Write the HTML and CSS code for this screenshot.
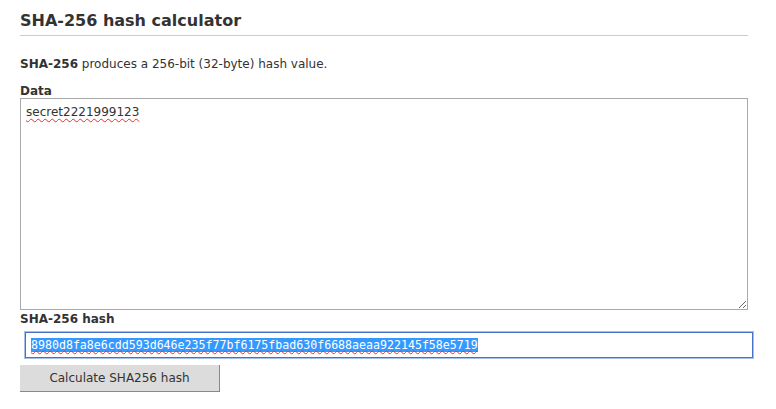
FILE: index.html
```html
<!DOCTYPE html>
<html>
<head>
<meta charset="utf-8">
<link rel="stylesheet" href="styles.css">
</head>
<body>
<div class="page">
  <h1 class="title">SHA-256 hash calculator</h1>
  <p class="intro"><b>SHA-256</b> produces a 256-bit (32-byte) hash value.</p>
  <div class="label">Data</div>
  <div class="data-wrap">
    <textarea class="data" spellcheck="false"></textarea>
    <span class="data-text">secret2221999123</span>
  </div>
  <div class="label label-hash">SHA-256 hash</div>
  <div class="hash-wrap"><div class="hash"><span class="sel">8980d8fa8e6cdd593d646e235f77bf6175fbad630f6688aeaa922145f58e5719</span></div></div>
  <div class="btn">Calculate SHA256 hash</div>
</div>
</body>
</html>
```
FILE: styles.css
```css
html, body { margin: 0; padding: 0; background: #fff; }
body { font-family: "DejaVu Sans", Verdana, sans-serif; color: #333; }
.page { width: 728px; padding: 0 0 0 20px; }
.title {
  margin: 0; padding: 11px 0 4px 0;
  font-size: 16px; font-weight: bold; color: #333;
  border-bottom: 1px solid #ccc; line-height: 20px;
}
.intro { margin: 0; padding-top: 20px; font-size: 12px; line-height: 16px; }
.label { font-size: 12px; font-weight: bold; margin-top: 12px; line-height: 14px; }
.data-wrap { position: relative; }
.data {
  display: block; box-sizing: border-box; width: 728px; height: 212px;
  margin: 0; padding: 6px 5px; border: 1px solid #a9a9a9;
  font-family: "DejaVu Sans", Verdana, sans-serif; font-size: 12px; color: #333;
  resize: both; outline: none;
}
.data-text {
  position: absolute; left: 6px; top: 7px;
  font-size: 12px; line-height: 14px; color: #333;
  text-decoration: underline wavy #e03030; text-decoration-thickness: 1px; text-underline-offset: 2px;
}
.label-hash { margin-top: 2px; }
.hash-wrap { padding: 6px 0 0 5px; }
.hash {
  box-sizing: border-box; width: 728px; height: 26px;
  border: 1px solid #4a72c4; box-shadow: 0 0 0 1px #a6c0ec;
  padding: 5px 5px 0 5px;
  font-family: "DejaVu Sans Mono", "Liberation Mono", monospace; font-size: 11.6px; line-height: 14px;
}
.sel { background: #3399ff; color: #fff; text-decoration: underline wavy #d33; text-decoration-thickness: 1px; }
.btn {
  box-sizing: border-box; width: 200px; height: 27px; margin-top: 7px;
  background: #dcdcdc; border-right: 1px solid #888; border-bottom: 1px solid #888;
  font-size: 12px; line-height: 26px; text-align: center; color: #333;
}
```
